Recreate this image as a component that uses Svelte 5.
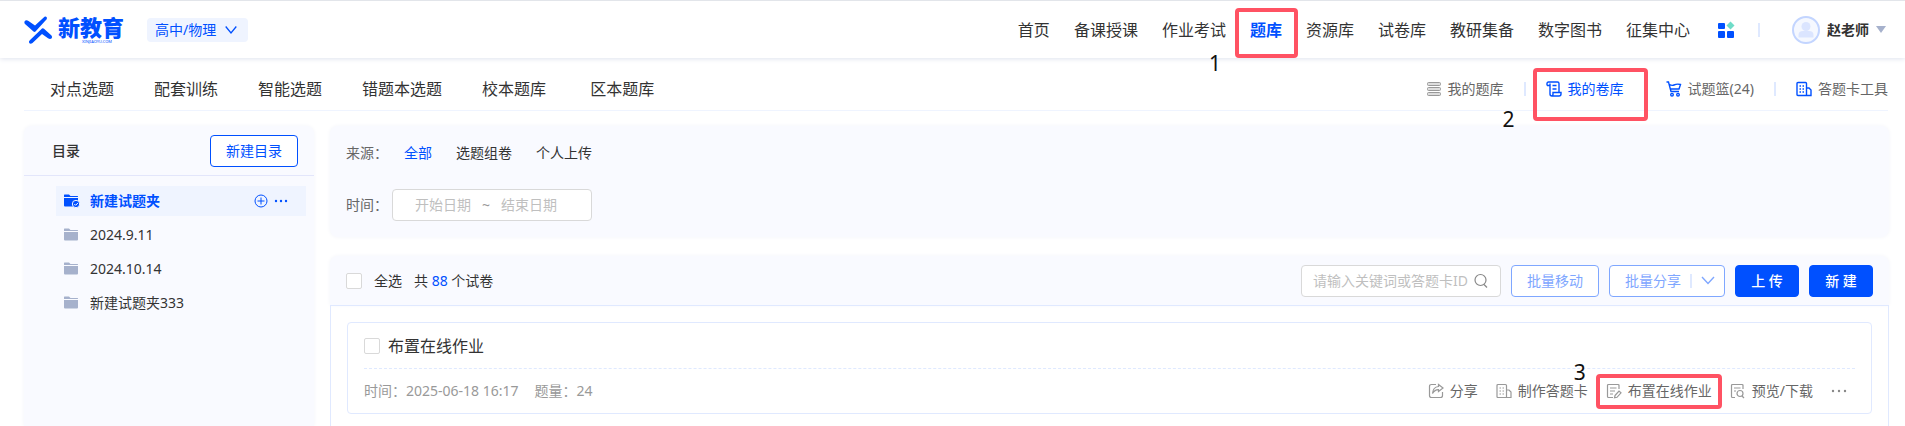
<script lang="ts">
  const navItems: string[] = [
    "首页",
    "备课授课",
    "作业考试",
    "题库",
    "资源库",
    "试卷库",
    "教研集备",
    "数字图书",
    "征集中心",
  ];
  const subItems: string[] = ["对点选题", "配套训练", "智能选题", "错题本选题", "校本题库 ", "区本题库"];
  const folders: string[] = ["新建试题夹", "2024.9.11", "2024.10.14", "新建试题夹333"];
  const sources: string[] = ["全部", "选题组卷", "个人上传"];

  let activeNav: string = "题库";
  let activeFolder: string = "新建试题夹";
  let activeSource: string = "全部";
  let keyword: string = "";
  let startDate: string = "";
  let endDate: string = "";
  let allChecked: boolean = false;
  let paperChecked: boolean = false;
</script>

<div class="page">
  <header class="top">
    <a class="logo" href="#home">
      <svg width="29" height="28" viewBox="0 0 29 28" fill="#0050ff">
        <path d="M0.500 5.500Q2 3.500 4.500 5L11 9.500L20.500 0.800Q22.500 -0.300 23 2Q22.800 3.500 21.500 4.500L11.500 15.500Q10.500 16.300 9.500 15.500L1 8Q0 7 0.500 5.500Z" />
        <path d="M18 12.500Q19 11.800 20 12.700L27.500 19.500Q28.800 21 27.500 22.500Q26 23.500 24 22.300L18 18L8.500 27Q6.500 28.500 5.200 27Q4.500 25.500 5.800 24.300Z" />
      </svg>
      <span class="brand">
        新教育
        <small>XINJIAOYU.COM</small>
      </span>
    </a>
    <label class="grade">
      <select aria-label="学科">
        <option>高中/物理</option>
      </select>
      <svg width="12" height="8" viewBox="0 0 12 8" fill="none" stroke="#0050ff" stroke-width="1.300">
        <path d="M0.700 0.500L6 7L11.300 0.500" />
      </svg>
    </label>
    <nav class="main-nav">
      {#each navItems as item}
        <a href="#nav" class:active={item === activeNav} on:click|preventDefault={() => (activeNav = item)}>
          {item}
          {#if item === "题库"}
            <span class="mark mark-nav"></span>
            <span class="step step-nav">1</span>
          {/if}
        </a>
      {/each}
    </nav>
    <button class="apps" aria-label="应用">
      <svg width="16" height="16" viewBox="0 0 16 16" fill="#0050ff">
        <rect y="1" width="7" height="6" rx="1" />
        <rect y="9" width="7" height="7" rx="1" />
        <rect x="9" y="9" width="7" height="7" rx="1" />
        <path d="M12.500 -0.500L16.500 3.500L12.500 7.500L8.500 3.500Z" fill="#6fdcc8" />
      </svg>
    </button>
    <span class="split"></span>
    <button class="user">
      <svg width="28" height="28" viewBox="0 0 28 28">
        <circle cx="14" cy="14" r="13" fill="#f5f8ff" stroke="#c3d5ff" stroke-width="2" />
        <circle cx="14" cy="10.500" r="4.500" fill="#dbe5ff" />
        <path d="M6.500 21.500V19Q6.500 15 11 15H17Q21.500 15 21.500 19V21.500Z" fill="#dbe5ff" />
      </svg>
      <b>赵老师</b>
      <svg width="10" height="7" viewBox="0 0 10 7"><path d="M0 0H10L5 7Z" fill="#a6b1cc" /></svg>
    </button>
  </header>

  <div class="sub">
    <nav class="sub-nav">
      {#each subItems as item}
        <a href="#sub">{item}</a>
      {/each}
    </nav>
    <nav class="tools">
      <a href="#questions">
        <svg width="16" height="16" viewBox="0 0 16 16" fill="#ddd" stroke="#999">
          <rect x="1.500" y="1.500" width="13" height="3" rx="1" />
          <rect x="1.500" y="6.500" width="13" height="3" rx="1" />
          <rect x="1.500" y="11.500" width="13" height="3" rx="1" />
        </svg>
        我的题库
      </a>
      <span class="split"></span>
      <a href="#papers" class="active">
        <svg width="16" height="16" viewBox="0 0 16 16" fill="none" stroke="#0050ff" stroke-width="1.400">
          <path d="M1 4.500V2.500Q1 1 2.500 1H11.500Q13 1 13 2.500V11" />
          <path d="M1 4.500H4M4 2.500V13Q4 15 6 15H13Q15 15 15 13V11.500H7V13Q7 15 5.500 15M6.500 4.500H10.500M6.500 8H10.500" />
        </svg>
        我的卷库
        <span class="mark mark-tool"></span>
        <span class="step step-tool">2</span>
      </a>
      <a href="#basket" class="basket">
        <svg width="16" height="16" viewBox="0 0 16 16" fill="none" stroke="#0050ff" stroke-width="1.400">
          <path d="M0.500 1H2.500L5 10.500H13M3.500 3.500Q6 5 8 4Q11 2.500 14.500 3.500L13 8H4.500" />
          <circle cx="6" cy="13.700" r="1.300" />
          <circle cx="12" cy="13.700" r="1.300" />
        </svg>
        试题篮(24)
      </a>
      <span class="split"></span>
      <a href="#card">
        <svg width="16" height="16" viewBox="0 0 16 16" fill="none" stroke="#0050ff" stroke-width="1.400">
          <path d="M10.500 14.500H2Q1 14.500 1 13.500V2.500Q1 1.500 2 1.500H9.500Q10.500 1.500 10.500 2.500ZM10.500 7H13L15 9V14.500H8" />
          <path d="M3.500 5H5M6.500 5H8M3.500 8H5M6.500 8H8M3.500 11H5M6.500 11H8" />
        </svg>
        答题卡工具
      </a>
    </nav>
  </div>

  <div class="body">
    <aside>
      <div class="aside-head">
        <h2>目录</h2>
        <button class="outline">新建目录</button>
      </div>
      <ul>
        {#each folders as folder}
          <li class:active={folder === activeFolder}>
            <button class="folder" on:click={() => (activeFolder = folder)}>
              <svg width="16" height="14" viewBox="0 0 16 14" fill="currentColor">
                <path d="M0 3V1Q0 0.500 0.500 0.500H5L6.500 2H13.500Q14 2 14 2.500V3Z" />
                <path d="M0 4H14V11.500Q14 12.500 13 12.500H1Q0 12.500 0 11.500Z" />
                {#if folder === activeFolder}
                  <circle cx="12" cy="10" r="3.700" stroke="#eff4ff" />
                  <path d="M10.300 10L11.600 11.300L13.900 9" fill="none" stroke="#fff" />
                {/if}
              </svg>
              {folder}
            </button>
            {#if folder === activeFolder}
              <button class="icon" aria-label="添加">
                <svg width="14" height="14" viewBox="0 0 14 14" fill="none" stroke="#0050ff">
                  <circle cx="7" cy="7" r="6" />
                  <path d="M7 3.500V10.500M3.500 7H10.500" />
                </svg>
              </button>
              <button class="icon" aria-label="更多">
                <svg width="14" height="14" viewBox="0 0 14 14" fill="#0050ff">
                  <circle cx="2" cy="7" r="1.200" />
                  <circle cx="7" cy="7" r="1.200" />
                  <circle cx="12" cy="7" r="1.200" />
                </svg>
              </button>
            {/if}
          </li>
        {/each}
      </ul>
    </aside>

    <main>
      <section class="filters">
        <div class="filter">
          <span class="name">来源：</span>
          <div class="options">
            {#each sources as source}
              <button class:active={source === activeSource} on:click={() => (activeSource = source)}>{source}</button>
            {/each}
          </div>
        </div>
        <div class="filter">
          <label class="name" for="start">时间：</label>
          <div class="range">
            <input id="start" type="text" placeholder="开始日期" bind:value={startDate} />
            <span>~</span>
            <input type="text" aria-label="结束日期" placeholder="结束日期" bind:value={endDate} />
          </div>
        </div>
      </section>

      <section class="papers">
        <div class="bar">
          <label class="check-all"><input type="checkbox" bind:checked={allChecked} />全选</label>
          <p>共 <em>88</em> 个试卷</p>
          <div class="search">
            <input type="text" aria-label="搜索" placeholder="请输入关键词或答题卡ID" bind:value={keyword} />
            <svg width="16" height="16" viewBox="0 0 16 16" fill="none" stroke="#888" stroke-width="1.200">
              <circle cx="7.500" cy="7" r="5.500" />
              <path d="M11 11.500L14 14.500" />
            </svg>
          </div>
          <button class="outline pale">批量移动</button>
          <button class="outline pale share">
            批量分享
            <span class="split"></span>
            <svg width="14" height="9" viewBox="0 0 14 9" fill="none" stroke="#7fa7ff" stroke-width="1.400">
              <path d="M1 1L7 7.500L13 1" />
            </svg>
          </button>
          <button class="solid">上 传</button>
          <button class="solid">新 建</button>
        </div>
        <div class="list">
          <article>
            <label class="title"><input type="checkbox" bind:checked={paperChecked} />布置在线作业</label>
            <div class="info">
              <span>时间：2025-06-18 16:17</span>
              <span>题量：24</span>
              <div class="actions">
                <button>
                  <svg width="16" height="16" viewBox="0 0 16 16" fill="none" stroke="#999" stroke-width="1.200">
                    <path d="M8 1.500H3.500Q1.500 1.500 1.500 3.500V12.500Q1.500 14.500 3.500 14.500H12.500Q14.500 14.500 14.500 12.500V9" />
                    <path d="M10.500 1.500L15 5L10.500 8.500V6.700Q7 6.500 4.500 10.500Q5 4 10.500 3.500Z" />
                  </svg>
                  分享
                </button>
                <button>
                  <svg width="16" height="16" viewBox="0 0 16 16" fill="none" stroke="#999" stroke-width="1.200">
                    <path d="M10.500 14.500H2Q1 14.500 1 13.500V2.500Q1 1.500 2 1.500H9.500Q10.500 1.500 10.500 2.500ZM10.500 7H13L15 9V14.500H8" />
                    <path d="M3.500 5H5M6.500 5H8M3.500 8H5M6.500 8H8M3.500 11H5M6.500 11H8" />
                  </svg>
                  制作答题卡
                </button>
                <button>
                  <svg width="16" height="16" viewBox="0 0 16 16" fill="none" stroke="#999" stroke-width="1.200">
                    <path d="M13 6V2.500Q13 1.500 12 1.500H2.500Q1.500 1.500 1.500 2.500V13.500Q1.500 14.500 2.500 14.500H7M4 5H10.500M4 8H9M4 11H7" />
                    <path d="M9 12.500L13 8L15 9.800L11 14.300L8.500 14.800Z" />
                  </svg>
                  布置在线作业
                  <span class="mark mark-action"></span>
                  <span class="step step-action">3</span>
                </button>
                <button>
                  <svg width="16" height="16" viewBox="0 0 16 16" fill="none" stroke="#999" stroke-width="1.200">
                    <path d="M13 6V2.500Q13 1.500 12 1.500H2.500Q1.500 1.500 1.500 2.500V13.500Q1.500 14.500 2.500 14.500H5M4 5H10.500M4 8H6" />
                    <circle cx="10" cy="10.500" r="3" />
                    <path d="M12 13L14 15" />
                  </svg>
                  预览/下载
                </button>
                <button class="more" aria-label="更多">
                  <svg width="16" height="16" viewBox="0 0 16 16" fill="#888">
                    <circle cx="2" cy="8" r="1.200" />
                    <circle cx="8" cy="8" r="1.200" />
                    <circle cx="14" cy="8" r="1.200" />
                  </svg>
                </button>
              </div>
            </div>
          </article>
        </div>
      </section>
    </main>
  </div>
</div>

<style>
  :global(body) {
    margin: 0;
    background: #fff;
  }

  .page {
    display: flex;
    flex-direction: column;
    min-height: 100vh;
    box-sizing: border-box;
    border-top: 1px solid #e4e6e9;
    font-family: "Noto Sans", "Noto Sans CJK SC", sans-serif;
    font-size: 14px;
    line-height: 20px;
    color: #333;
  }

  button,
  input,
  select {
    font: inherit;
    color: inherit;
    margin: 0;
    box-sizing: border-box;
  }

  button {
    padding: 0;
    border: 0;
    background: none;
    white-space: nowrap;
    cursor: pointer;
  }

  a {
    color: inherit;
    text-decoration: none;
    white-space: nowrap;
  }

  svg {
    display: block;
    flex: none;
    overflow: visible;
  }

  .split {
    width: 2px;
    height: 14px;
    background: #dfe9ff;
  }

  /* header */
  .top {
    display: flex;
    align-items: center;
    height: 57px;
    padding: 0 19px 0 24px;
    box-shadow: 0 1px 5px #dfe3ee;
  }

  .logo {
    display: flex;
    align-items: center;
    gap: 5px;
  }

  .brand {
    position: relative;
    padding-bottom: 6px;
    font-size: 22px;
    font-weight: 900;
    line-height: 22px;
    color: #0050ff;
  }

  .brand small {
    position: absolute;
    left: 24px;
    bottom: 0;
    font-size: 4px;
    line-height: 4px;
    font-weight: 400;
  }

  .grade {
    display: flex;
    align-items: center;
    gap: 8px;
    height: 24px;
    margin-left: 23px;
    padding: 0 11px 0 8px;
    border-radius: 4px;
    background: #eff4ff;
    color: #0050ff;
  }

  .grade select {
    appearance: none;
    padding: 0;
    border: 0;
    background: none;
  }

  .main-nav {
    display: flex;
    gap: 24px;
    margin-left: auto;
    font-size: 16px;
    line-height: 24px;
  }

  .main-nav a {
    position: relative;
  }

  .main-nav .active {
    color: #0050ff;
    font-weight: 700;
  }

  .apps {
    margin: 0 24px 0 28px;
  }

  .user {
    display: flex;
    align-items: center;
    gap: 7px;
    margin-left: 32px;
  }

  /* red frames with step numbers */
  .mark {
    position: absolute;
    border: 4px solid #ff5263;
    border-radius: 4px;
    pointer-events: none;
  }

  .mark-nav {
    inset: -10px -16px -16px -15px;
  }

  .mark-tool {
    inset: -11px -24px -22px -13px;
  }

  .mark-action {
    inset: -7px -10px -8px;
  }

  .step {
    position: absolute;
    font-size: 21px;
    line-height: 16px;
    font-weight: 400;
    color: #111;
  }

  .step-nav {
    left: -41px;
    top: 37px;
  }

  .step-tool {
    left: -43px;
    top: 32px;
  }

  .step-action {
    left: -32px;
    top: -17px;
  }

  /* second row */
  .sub {
    display: flex;
    align-items: center;
    justify-content: space-between;
    height: 42px;
    margin: 0 17px 0 24px;
    padding: 10px 0 0 26px;
    border-bottom: 1px solid #eff4ff;
  }

  .sub-nav {
    display: flex;
    gap: 40px;
    font-size: 16px;
    line-height: 24px;
  }

  .sub-nav a {
    white-space: pre;
  }

  .tools {
    display: flex;
    align-items: center;
    gap: 20px;
    color: #666;
  }

  .tools a {
    position: relative;
    display: flex;
    align-items: center;
    gap: 6px;
  }

  .tools .active {
    color: #0050ff;
  }

  .tools .basket {
    margin-left: 22px;
  }

  /* folders */
  .body {
    flex: 1;
    display: flex;
    gap: 16px;
    padding: 15px 16px 0 24px;
  }

  aside,
  .filters {
    background: #f9faff;
    border-radius: 8px;
    box-shadow: 0 0 4px #f3f4f9;
  }

  aside {
    width: 290px;
    flex: none;
    border-radius: 8px 8px 0 0;
  }

  .aside-head {
    display: flex;
    align-items: center;
    justify-content: space-between;
    height: 49px;
    padding: 0 16px 0 28px;
    border-bottom: 1px solid #e3e6fb;
  }

  h2 {
    margin: 0;
    font-size: 14px;
    font-weight: 500;
  }

  .outline,
  .solid {
    height: 32px;
    border: 1px solid #0050ff;
    border-radius: 4px;
    padding: 0 15px;
    background: #fff;
    color: #0050ff;
  }

  .pale {
    border-color: #7fa7ff;
    color: #7fa7ff;
  }

  .solid {
    min-width: 64px;
    background: #0050ff;
    color: #fff;
    font-weight: 500;
  }

  ul {
    display: flex;
    flex-direction: column;
    gap: 4px;
    margin: 0;
    padding: 10px 8px 0 32px;
    list-style: none;
  }

  li {
    display: flex;
    align-items: center;
    gap: 6px;
    height: 30px;
    padding: 0 18px 0 8px;
  }

  li.active {
    background: #eff4ff;
  }

  .folder {
    display: flex;
    align-items: center;
    gap: 10px;
    flex: 1;
  }

  .folder svg {
    color: #a6b1cc;
  }

  .active .folder,
  .active .folder svg {
    color: #0050ff;
    font-weight: 700;
  }

  /* filters */
  main {
    flex: 1;
    min-width: 0;
    display: flex;
    flex-direction: column;
    gap: 19px;
  }

  .filters {
    display: flex;
    flex-direction: column;
    gap: 20px;
    padding: 11px 16px 16px;
  }

  .filter {
    display: flex;
    align-items: center;
    height: 32px;
  }

  .name {
    width: 46px;
    color: #666;
    white-space: nowrap;
  }

  .options {
    display: flex;
    gap: 24px;
    margin-left: 12px;
  }

  .options .active,
  em {
    color: #0050ff;
    font-style: normal;
  }

  .range {
    display: flex;
    align-items: center;
    width: 200px;
    height: 32px;
    box-sizing: border-box;
    padding: 0 23px 0 11px;
    border: 1px solid #d9d9d9;
    border-radius: 4px;
    background: #fff;
    color: #999;
  }

  .range input,
  .search input {
    flex: 1;
    min-width: 0;
    padding: 0;
    border: 0;
    outline: none;
    background: none;
  }

  .range input {
    text-align: center;
  }

  input::placeholder {
    color: #bfbfbf;
    opacity: 1;
  }

  /* papers */
  .papers {
    flex: 1;
    display: flex;
    flex-direction: column;
  }

  .bar {
    display: flex;
    align-items: center;
    gap: 10px;
    height: 49px;
    padding: 0 16px;
    border-radius: 8px 8px 0 0;
    background: #f9faff;
    box-shadow: 0 0 4px #f3f4f9;
  }

  .check-all,
  .title {
    display: flex;
    align-items: center;
    gap: 12px;
  }

  .bar p {
    margin: 0 auto 0 2px;
  }

  input[type="checkbox"] {
    appearance: none;
    width: 16px;
    height: 16px;
    border: 1px solid #d9d9d9;
    border-radius: 2px;
    background: #fff;
  }

  input[type="checkbox"]:checked {
    background: #0050ff;
  }

  .search {
    display: flex;
    align-items: center;
    width: 200px;
    height: 32px;
    box-sizing: border-box;
    padding: 0 11px;
    border: 1px solid #d9d9d9;
    border-radius: 4px;
    background: #fff;
  }

  .share {
    display: flex;
    align-items: center;
    gap: 9px;
    padding-right: 9px;
  }

  .list {
    flex: 1;
    padding: 16px 16px 12px;
    border: 1px solid #e0e9ff;
    border-bottom: 0;
  }

  article {
    padding: 0 16px;
    border: 1px solid #e0e9ff;
    border-radius: 4px;
  }

  .title {
    gap: 8px;
    height: 45px;
    font-size: 16px;
    border-bottom: 1px dashed #dfe9ff;
  }

  .info {
    display: flex;
    align-items: center;
    gap: 16px;
    height: 44px;
    color: #999;
  }

  .actions {
    display: flex;
    align-items: center;
    gap: 18px;
    margin-left: auto;
    padding-right: 8px;
    color: #666;
  }

  .actions button {
    position: relative;
    display: flex;
    align-items: center;
    gap: 6px;
  }
</style>
